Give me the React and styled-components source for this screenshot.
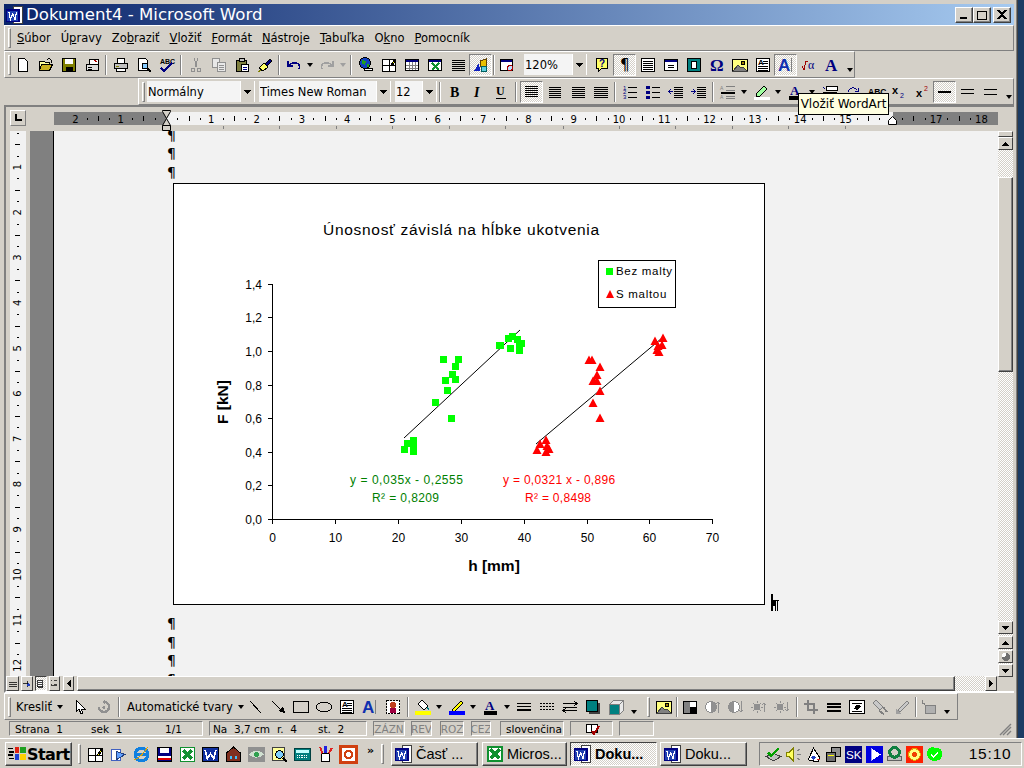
import React from 'react';
import styled, { createGlobalStyle } from 'styled-components';

const UI = '"DejaVu Sans", "Liberation Sans", sans-serif';
const FACE = '#d4d0c8';
const SHADOW = '#808080';
const DITHER = 'repeating-conic-gradient(#fff 0 25%, #d4d0c8 0 50%) 0 0 / 2px 2px';

const Global = createGlobalStyle`
  html, body { margin: 0; padding: 0; background: ${FACE}; overflow: hidden; }
  #root { width: 1024px; height: 768px; }
  * { box-sizing: border-box; }
`;

const Screen = styled.div`
  width: 1024px; height: 768px; display: flex; flex-direction: column; overflow: hidden;
  background: ${FACE}; font: 11px ${UI}; color: #000; position: relative; opacity: .999;
`;
const Upper = styled.div`display: flex; height: 738px; background: #1c3c64;`;
const Win = styled.div`
  width: 1018px; height: 738px; padding: 4px 3px 0 4px; background: ${FACE};
  border-right: 1px solid #404040; display: flex; flex-direction: column;
  box-shadow: inset -1px 0 0 ${SHADOW};
`;
const TitleBar = styled.div`
  height: 21px; flex: none; display: flex; align-items: center; padding: 0 3px 0 2px;
  background: linear-gradient(90deg, #0a246a, #a6caf0);
`;
const TitleText = styled.span`
  font: 16.6px ${UI}; color: #fff; margin-left: 2px; flex: 1; white-space: nowrap;
`;
const WinBtn = styled.button`
  width: 18px; height: 16px; padding: 0; margin-left: ${p => p.$gap || 0}px; background: ${FACE}; border: 1px solid;
  border-color: #fff #404040 #404040 #fff; display: flex; align-items: center; justify-content: center;
  box-shadow: inset -1px -1px 0 ${SHADOW};
`;
const Bar = styled.div`
  height: ${p => p.$h || 27}px; flex: none; display: flex; align-items: center;
  width: ${p => p.$w ? p.$w + 'px' : 'auto'}; margin-left: ${p => p.$ml || 0}px; padding: 0 0 0 3px;
  background: ${FACE};
  border-top: 1px solid #fff; border-left: 1px solid #fff; border-bottom: 1px solid ${SHADOW}; border-right: 1px solid ${SHADOW};
`;
const Grip = styled.i`
  width: 3px; height: 20px; flex: none; display: block; margin-left: ${p => p.$ml || 0}px; margin-right: ${p => p.$mr ?? 0}px;
  border: 1px solid; border-color: #fff ${SHADOW} ${SHADOW} #fff; 
`;
const Divider = styled.i`
  width: 2px; height: 20px; flex: none; display: block; margin: 0 ${p => p.$m ?? 2}px;
  border-left: 1px solid ${SHADOW}; border-right: 1px solid #fff;
`;
const MenuList = styled.div`display: flex; gap: 10px; margin-left: 6px; font: 11.5px ${UI}; color: #000;`;
const MenuItem = styled.span`white-space: nowrap;`;
const Tool = styled.span`
  width: ${p => p.$w || 23}px; height: 22px; flex: none; display: flex; align-items: center;
  justify-content: ${p => p.$left ? 'flex-start' : 'center'}; padding-left: ${p => p.$left ? 4 : 0}px;
  gap: 3px; ${p => p.$on && `background: ${DITHER}; border: 1px solid; border-color: ${SHADOW} #fff #fff ${SHADOW};`}
`;
const Caret = styled.i`
  flex: none; display: block; width: 0; height: 0; border: 3px solid transparent; border-top: 4px solid ${p => p.$c || '#000'};
  border-bottom: 0; margin-left: 2px;
`;
const Chevron = styled.span`
  width: 11px; height: 22px; flex: none; display: flex; align-items: flex-end; justify-content: center; padding-bottom: 4px;
`;
const Combo = styled.span`
  width: ${p => p.$w}px; height: 21px; flex: none; margin-left: ${p => p.$ml || 0}px; display: flex; background: #f4f4f4;
  font: 11.5px ${UI}; align-items: center; padding-left: 1px; white-space: nowrap; overflow: hidden;
`;
const ComboText = styled.span`flex: 1; overflow: hidden;`;
const ComboArrow = styled.span`
  width: 15px; height: 100%; background: ${FACE}; flex: none; border-left: 1px solid #fff; border-right: 1px solid #fff;
  display: flex; align-items: center; justify-content: center;
`;
const Tooltip = styled.div`
  position: absolute; left: 798px; top: 93px; width: 91px; height: 22px; background: #ffffe1; border: 1px solid #000;
  font: 12px ${UI}; display: flex; align-items: center; justify-content: center; white-space: nowrap; z-index: 5;
`;
const Editor = styled.div`
  flex: none; height: 588px; display: flex; flex-direction: column; border-top: 2px solid ${SHADOW}; border-left: 2px solid ${SHADOW};
  border-bottom: 2px solid #fff;
`;
const RulerRow = styled.div`display: flex; height: 24px; flex: none; align-items: stretch; padding-left: 4px;`;
const Corner = styled.div`
  width: 16px; height: 16px; margin-top: 3px; flex: none; border: 1px solid; border-color: #fff ${SHADOW} ${SHADOW} #fff;
  background: ${FACE}; display: flex; align-items: center; justify-content: center;
`;
const RulerArt = styled.svg`display: block; flex: none;`;
const RulerGap = styled.div`width: 28px; flex: none;`;
const MidRow = styled.div`display: flex; flex: 1; min-height: 0; padding-left: 4px;`;
const GrayBand = styled.div`width: 24px; flex: none; margin-left: 4px; background: ${SHADOW}; border-right: 1px solid #000;`;
const Doc = styled.div`
  width: 944px; flex: none; background: #f2f2f2; overflow: hidden; padding-left: 113px; display: flex; flex-direction: column;
`;
const Mark = styled.div`
  height: 18.5px; flex: none; font: 14px/18px "DejaVu Sans", sans-serif; color: #000; margin-top: ${p => p.$mt || 0}px;
`;
const ChartRow = styled.div`display: flex; align-items: flex-end; flex: none; margin: 2px 0 9px 6px; gap: 6px;`;
const ChartBox = styled.div`width: 592px; height: 422px; flex: none; background: #fff; border: 1px solid #000;`;
const ChartArt = styled.svg`display: block; width: 590px; height: 420px;`;
const ChartTitle = styled.text`font: 15.5px "Liberation Sans", sans-serif; letter-spacing: .7px; fill: #000;`;
const ChartTick = styled.text`font: 12px "Liberation Sans", sans-serif; fill: #000;`;
const ChartAxisName = styled.text`font: bold 15.5px "Liberation Sans", sans-serif; fill: #000;`;
const ChartEq = styled.text`font: 12px "Liberation Sans", sans-serif; fill: ${p => p.$c}; letter-spacing: ${p => p.$ls}px;`;
const LegendText = styled.text`font: 11.5px "Liberation Sans", sans-serif; letter-spacing: .7px; fill: #000;`;
const CaretMark = styled.svg`display: block; flex: none; margin-bottom: -6px;`;
const VScroll = styled.div`width: 15px; flex: none; display: flex; flex-direction: column; background: ${DITHER};`;
const Thumb = styled.div`
  height: ${p => p.$h}px; margin-top: ${p => p.$mt}px; flex: none; width: 100%; background: ${FACE}; border: 1px solid;
  border-color: #fff #404040 #404040 #fff; box-shadow: inset -1px -1px 0 ${SHADOW};
`;
const ScrollBtn = styled.span`
  width: ${p => p.$w || 15}px; height: ${p => p.$h || 13}px; flex: none; margin-top: ${p => p.$mt || 0}px; margin-left: ${p => p.$ml || 0}px;
  background: ${p => p.$on ? DITHER : FACE}; border: 1px solid; border-color: ${p => p.$on ? `#404040 #fff #fff #404040` : `#fff #404040 #404040 #fff`};
  display: flex; align-items: center; justify-content: center;
`;
const HScroll = styled.div`height: 15px; flex: none; display: flex; padding-left: 0; align-items: stretch;`;
const HThumb = styled.div`
  width: 878px; flex: none; margin-left: 3px; background: ${FACE}; border: 1px solid; border-color: #fff #404040 #404040 #fff; box-shadow: inset -1px -1px 0 ${SHADOW};
`;
const HTrack = styled.div`width: 30px; flex: none; background: ${DITHER};`;
const DrawLabel = styled.span`
  font: 11.5px ${UI}; white-space: nowrap; display: flex; align-items: center; gap: 3px; flex: none; margin: 0 ${p => p.$mr || 0}px 0 ${p => p.$ml || 0}px;
`;
const Status = styled.div`height: 16px; flex: none; display: flex; align-items: stretch; gap: 6px; padding: 1px 0 0 5px; position: relative;`;
const Pane = styled.div`
  width: ${p => p.$w}px; flex: none; border: 1px solid; border-color: ${SHADOW} #fff #fff ${SHADOW}; display: flex; align-items: center; padding-left: ${p => p.$pl ?? 5}px;
  font: 10.5px ${UI}; white-space: pre; color: ${p => p.$dim ? SHADOW : '#000'}; margin-left: ${p => p.$ml || 0}px; justify-content: ${p => p.$c ? 'center' : 'flex-start'};
  overflow: hidden;
`;
const Cell = styled.span`width: ${p => p.$w}px; flex: none;`;
const ResizeGrip = styled.svg`position: absolute; right: 2px; bottom: 0;`;
const Taskbar = styled.div`
  height: 30px; flex: none; display: flex; align-items: center; padding: 1px 2px 0 5px; background: ${FACE}; border-top: 1px solid #fff;
`;
const StartBtn = styled.div`
  width: 67px; height: 24px; flex: none; display: flex; align-items: center; gap: 1px; padding-left: 2px; border: 1px solid; border-color: #fff #404040 #404040 #fff;
  font: bold 16px ${UI}; box-shadow: inset -1px -1px 0 ${SHADOW}; letter-spacing: -.6px;
`;
const QuickIcon = styled.span`width: 23px; height: 20px; flex: none; display: flex; align-items: center; justify-content: center;`;
const More = styled.span`width: 21px; font: bold 11px ${UI}; flex: none; text-align: center; margin-bottom: 8px;`;
const TaskBtn = styled.div`
  width: ${p => p.$w || 87}px; height: 24px; flex: none; margin-left: ${p => p.$ml || 0}px; display: flex; align-items: center; gap: 3px; padding-left: 3px; border: 1px solid;
  border-color: ${p => p.$on ? `#404040 #fff #fff #404040` : `#fff #404040 #404040 #fff`}; background: ${p => p.$on ? DITHER : FACE};
  font: ${p => p.$on ? 'bold' : 'normal'} 14.5px "Liberation Sans", ${UI}; white-space: nowrap; overflow: hidden;
  box-shadow: ${p => p.$on ? 'none' : `inset -1px -1px 0 ${SHADOW}`};
`;
const Tray = styled.div`
  margin-left: 12px; width: 263px; height: 24px; flex: none; border: 1px solid; border-color: ${SHADOW} #fff #fff ${SHADOW}; display: flex; align-items: center; padding-left: 3px;
`;
const TrayIcon = styled.span`width: 20.2px; flex: none; display: flex; align-items: center; justify-content: center;`;
const Clock = styled.span`margin-left: 24px; font: 15.5px "Liberation Sans", sans-serif; letter-spacing: .8px;`;
const Glyph = styled.svg`display: block; flex: none; overflow: visible; shape-rendering: ${p => p.$smooth ? 'auto' : 'crispEdges'};`;
const IconText = styled.text`font: ${p => p.$w || 'normal'} ${p => p.$s || 9}px ${p => p.$f || '"Liberation Sans", sans-serif'}; fill: ${p => p.$c || '#000'};`;

const K = { stroke: '#000', fill: 'none' };
const lines = (ys, x1 = 2, x2 = 14, c = '#000') => ys.map(y => <path key={y} d={`M${x1} ${y + .5}H${x2}`} stroke={c} />);
const ICONS = {
  new: <path d="M3.5 1.5h6l3 3v10h-9z" fill="#fff" stroke="#000" />,
  open: <><path d="M1.5 13.5v-9h5l1 1h4v2" {...K} fill="#ffff99" /><path d="M1.5 13.5l2-6h11l-3 6z" fill="#c8b020" stroke="#000" /><path d="M9 3l2-2 2 2v3" stroke="#000" fill="none" /></>,
  save: <><path d="M1.5 1.5h13v13h-13z" fill="#808000" stroke="#000" /><path d="M4 2h8v5H4z" fill="#fff" /><path d="M4.5 10h7v4h-7z" fill="#000" /></>,
  mail: <><path d="M2.5 7.5h12v6h-12z" fill="#ddd" stroke="#000" /><path d="M5 2.5h9v5H5z" fill="#fff" stroke="#000" /><path d="M4 10h4M4 12h4" stroke="#000" /><path d="M10 3l3 2" stroke="#a00" /></>,
  print: <><path d="M4.5 1.5h7v5h-7z" fill="#fff" stroke="#000" /><path d="M1.5 6.5h13v5h-13z" fill="#c0c0c0" stroke="#000" /><path d="M3.5 11.5h9v3h-9z" fill="#fff" stroke="#000" /><path d="M3 9h3" stroke="#808000" /></>,
  preview: <><path d="M2.5 1.5h7l2 2v10h-9z" fill="#fff" stroke="#000" /><circle cx="9" cy="9" r="3" fill="#8cf" stroke="#000" /><path d="M11 11l4 4" stroke="#000" strokeWidth="2" /></>,
  spell: <><IconText x="1" y="7" $s={7} $w="bold">ABC</IconText><path d="M2 11l3 3 8-8" stroke="#000080" strokeWidth="2" fill="none" /></>,
  cut: <><path d="M6 1l3 9M10 1L7 10" stroke="#909090" fill="none" /><circle cx="5" cy="13" r="2" fill="none" stroke="#909090" /><circle cx="11" cy="13" r="2" fill="none" stroke="#909090" /></>,
  copy: <><path d="M1.5 1.5h7v9h-7z" fill="#e8e8e8" stroke="#909090" /><path d="M6.5 5.5h8v9h-8z" fill="#e8e8e8" stroke="#909090" /><path d="M8 8h5M8 10h5M8 12h5" stroke="#909090" /></>,
  paste: <><path d="M2.5 3.5h10v11h-10z" fill="#808040" stroke="#000" /><path d="M5 1.5h5v3H5z" fill="#c0c0c0" stroke="#000" /><path d="M7.5 7.5h7v7h-7z" fill="#fff" stroke="#000" /><path d="M9 10h4M9 12h4" stroke="#000080" /></>,
  brush: <><path d="M8 7l5-5 2 2-5 5z" fill="#000080" stroke="#000" /><path d="M2 11l5-5 4 4-5 4z" fill="#ffff66" stroke="#000" /><path d="M1 15l3-2" stroke="#808000" /></>,
  undo: <path d="M2 4v5h5M2.5 8.5c3-3 9-4 11 0 .5 1.5 0 3-1 4" stroke="#000080" strokeWidth="1.6" fill="none" />,
  redo: <path d="M14 4v5H9M13.5 8.5c-3-3-9-4-11 0-.5 1.5 0 3 1 4" stroke="#a0a0a0" strokeWidth="1.6" fill="none" />,
  web: <><circle cx="7" cy="6" r="5.5" fill="#1040c0" stroke="#000" /><path d="M4 3l4 1-1 4-3-1zM9 7h2v3H9z" fill="#20a020" /><path d="M6 11.5h8v2H6z" fill="#fff" stroke="#000" /></>,
  tableDraw: <><path d="M1.5 2.5h13v12h-13zM8 3v11M2 8.5h12" fill="#fff" stroke="#000" /><path d="M10 8l4-6 1 1-4 6z" fill="#ffff00" stroke="#000" /></>,
  table: <><path d="M1.5 2.5h13v11h-13z" fill="#fff" stroke="#000" /><path d="M2 3h12v2H2z" fill="#000080" /><path d="M2 8h12M2 11h12M5.5 5v8M8.5 5v8M11.5 5v8" stroke="#808080" /></>,
  excel: <><path d="M1.5 2.5h13v11h-13z" fill="#fff" stroke="#000" /><path d="M2 3h12v2H2z" fill="#000080" /><path d="M5 6l7 7M12 6l-7 7" stroke="#109030" strokeWidth="2.5" /></>,
  cols: lines([3, 5, 7, 9, 11, 13], 2, 15),
  draw: <><path d="M7 4l6-2v7l-6 1z" fill="#e8c000" stroke="#604000" /><path d="M1 14l5-8 1 8z" fill="#1020c0" /><circle cx="11" cy="12" r="3" fill="#60d0e0" stroke="#006060" /></>,
  map: <><path d="M1.5 2.5h12v11h-12z" fill="#fff" stroke="#000" /><path d="M2 3h11v2H2z" fill="#000080" /><circle cx="11" cy="11" r="2.5" fill="#c0e0ff" stroke="#a00" /></>,
  help: <><path d="M2.5 1.5h11v10h-6l-3 3v-3h-2z" fill="#ffff66" stroke="#000" /><IconText x="5" y="10" $s={10} $w="bold" $c="#000080">?</IconText></>,
  pilcrow: <IconText x="3" y="13" $s={15} $f='"DejaVu Sans", sans-serif'>¶</IconText>,
  doclines: <><path d="M1.5 1.5h13v13h-13z" fill="#fff" stroke="#000" />{lines([4, 6, 8, 10, 12], 3, 13)}</>,
  frameT: <><path d="M1.5 2.5h13v11h-13z" fill="#fff" stroke="#000" /><path d="M2 3h12v2H2z" fill="#000080" /><path d="M5 8h6M5 10h6" stroke="#000" /></>,
  reading: <><path d="M1.5 1.5h13v13h-13z" fill="#008080" stroke="#000" /><path d="M5.5 4.5h5v7h-5z" fill="#fff" stroke="#000" /></>,
  omega: <IconText x="1" y="14" $s={17} $w="bold" $c="#000080" $f='"Liberation Serif", serif'>Ω</IconText>,
  picture: <><path d="M.5 2.5h15v12H.5z" fill="#ffff80" stroke="#000" /><circle cx="11" cy="6" r="2" fill="#a08000" stroke="#000" /><path d="M1 14l5-6 3 3 2-1 4 4z" fill="#808080" stroke="#404040" /></>,
  textbox: <><path d="M1.5 1.5h13v13h-13z" fill="#fff" stroke="#000" /><IconText x="3" y="8" $s={8} $w="bold">A</IconText><path d="M8 4h5M8 6h5M3 9h10M3 11h10M3 13h10" stroke="#000" /></>,
  wordart: <><IconText x="0" y="14" $s={17} $w="bold" $c="#1030b0">A</IconText><path d="M13.5 1v14" stroke="#808080" /></>,
  sqrt: <><path d="M1 9l2 4 2-9h2" stroke="#a00000" fill="none" /><IconText x="7" y="12" $s={12} $c="#000080" $f='"Liberation Serif", serif'>α</IconText></>,
  aBlue: <IconText x="1" y="14" $s={17} $w="bold" $c="#000080" $f='"Liberation Serif", serif'>A</IconText>,
  bold: <IconText x="3" y="13" $s={14} $w="bold" $f='"Liberation Serif", serif'>B</IconText>,
  italic: <IconText x="4" y="13" $s={14} $w="bold italic" $f='"Liberation Serif", serif'>I</IconText>,
  under: <><IconText x="3" y="11" $s={12} $w="bold" $f='"Liberation Serif", serif'>U</IconText><path d="M3 14h10" stroke="#000" /></>,
  aLeft: lines([2, 4, 6, 8, 10, 12], 1, 14),
  aCenter: lines([3, 5, 7, 9, 11, 13], 2, 14),
  aRight: lines([3, 5, 7, 9, 11, 13], 2, 15),
  aJust: lines([3, 5, 7, 9, 11, 13], 1, 15),
  numList: <><IconText x="1" y="6" $s={6} $c="#000080">1</IconText><IconText x="1" y="10" $s={6} $c="#000080">2</IconText><IconText x="1" y="15" $s={6} $c="#000080">3</IconText>{lines([3, 8, 13], 6, 15)}</>,
  bulList: <><path d="M1 2h4v3H1zM1 7h4v3H1zM1 12h4v3H1z" fill="#000080" />{lines([3, 8, 13], 7, 15)}</>,
  outdent: <>{lines([3, 5, 9, 11, 13], 6, 15)}<path d="M5 7.5H1M3 5L1 7.5 3 10" stroke="#000080" fill="none" /><path d="M6 7.5h9" stroke="#000" /></>,
  indent: <>{lines([3, 5, 9, 11, 13], 6, 15)}<path d="M0 7.5h4M2 5l2 2.5L2 10" stroke="#000080" fill="none" /><path d="M6 7.5h9" stroke="#000" /></>,
  border: <>{lines([2, 6], 6, 15, '#808080')}<path d="M1 9h14" stroke="#000" strokeWidth="2" />{lines([12, 14], 6, 15, '#808080')}<IconText x="0" y="6" $s={5} $c="#808080">A</IconText><IconText x="0" y="15" $s={5} $c="#808080">A</IconText></>,
  highlight: <><path d="M3 9l7-7 3 3-7 7-4 1z" fill="#a0ffa0" stroke="#000" /><path d="M0 13h16v3H0z" fill="#fff" /></>,
  fontColor: <><IconText x="2" y="11" $s={13} $w="bold" $c="#000080" $f='"Liberation Serif", serif'>A</IconText><path d="M1 12h13v4H1z" fill="#000" /></>,
  enclosed: <><path d="M4.5 2.5h11v4h-11z" fill="#fff" stroke="#000" /><path d="M1 3l2 2" stroke="#000080" /><path d="M1 8h14M1 10h14" stroke="#000" /></>,
  flow: <><path d="M3 8a5 5 0 0 1 9-2M13 4v3h-3" stroke="#000080" fill="none" /><path d="M4 11h9" stroke="#000" /></>,
  abc: <IconText x="0" y="11" $s={8.5} $w="bold">ABC</IconText>,
  sub: <><IconText x="1" y="10" $s={11} $w="bold">x</IconText><IconText x="9" y="14" $s={7} $c="#000080">2</IconText></>,
  sup: <><IconText x="2" y="13" $s={11} $w="bold">x</IconText><IconText x="10" y="7" $s={7} $c="#a00000">2</IconText></>,
  line1: <path d="M1 7.5h13" stroke="#000" strokeWidth="2" />,
  line2: <path d="M1 5.5h13M1 9.5h13" stroke="#000" />,
  line3: <path d="M1 5.5h13M1 10.5h13" stroke="#000" />,
  cursor: <path d="M3 1v12l3-3 2 5 2-1-2-4h4z" fill="#fff" stroke="#000" />,
  rotate: <><path d="M3 8a5 5 0 1 0 6-5" stroke="#909090" strokeWidth="2.5" fill="none" /><path d="M9 0v6l-3-3z" fill="#909090" /><circle cx="8" cy="8.5" r="1.5" fill="#909090" /></>,
  line: <path d="M3 2l11 12" stroke="#000" />,
  arrow: <><path d="M2 2l9 9" stroke="#000" /><path d="M8 12l5-5 2 7z" fill="#000" /></>,
  rect: <path d="M.5 2.5h15v11H.5z" fill="none" stroke="#000" />,
  ellipse: <ellipse cx="8" cy="8" rx="7.5" ry="5" fill="none" stroke="#000" />,
  clip: <><path d="M1.5 1.5h13v13h-13z" fill="#fff" stroke="#000" strokeDasharray="2 1" /><circle cx="8" cy="6" r="3" fill="#c04020" /><path d="M5 9h6v5H5z" fill="#a00040" /></>,
  fill: <><path d="M7 1l6 6-4 4-6-6z" fill="#fff" stroke="#000" /><path d="M12 8l2 3" stroke="#008080" /><path d="M0 12h16v4H0z" fill="#ffff00" /></>,
  pen: <><path d="M4 10l8-8 2 2-8 8-3 1z" fill="#ffff00" stroke="#000" /><path d="M0 12h16v4H0z" fill="#0000ff" /></>,
  lineStyle: <><path d="M1 4.5h14M1 7.5h14" stroke="#000" strokeWidth="1" /><path d="M1 11h14" stroke="#000" strokeWidth="2" /></>,
  dash: <path d="M1 4.5h14M1 7.5h14M1 10.5h14" stroke="#000" strokeDasharray="2 1" />,
  arrows: <><path d="M1 4.5h14M12 2l3 2.5L12 7M1 11.5h14M4 9l-3 2.5L4 14M1 8h14" stroke="#000" fill="none" /></>,
  shadow: <><path d="M4 4h11v11H4z" fill="#404040" /><path d="M1.5 1.5h11v11h-11z" fill="#008080" stroke="#000" /></>,
  cube: <><path d="M1.5 5.5h10v10h-10z" fill="#008080" stroke="#808080" /><path d="M1.5 5.5l4-4h10l-4 4zM11.5 5.5l4-4v10l-4 4z" fill="#e8e8e8" stroke="#808080" /></>,
  contrast: <><path d="M1 2h7v12H1z" fill="#808080" /><path d="M8 2h6v6H8z" fill="#fff" /><path d="M8 8h6v6H8z" fill="#000" /><path d="M1 2h13v12H1z" fill="none" stroke="#000" /></>,
  conUp: <><circle cx="6" cy="8" r="5.5" fill="#fff" stroke="#909090" /><path d="M6 3a5 5 0 0 1 0 10z" fill="#909090" /><path d="M13 14V3M11 5l2-2 2 2" stroke="#909090" fill="none" /></>,
  conDn: <><circle cx="6" cy="8" r="5.5" fill="#fff" stroke="#909090" /><path d="M6 3a5 5 0 0 0 0 10z" fill="#909090" /><path d="M13 2v11M11 11l2 2 2-2" stroke="#909090" fill="none" /></>,
  sunUp: <><circle cx="6" cy="8" r="3" fill="#909090" /><path d="M6 2v2M6 12v2M0 8h2M10 8h2M2 4l2 2M8 10l2 2M10 4L8 6M2 12l2-2M13 13V4M11 6l2-2 2 2" stroke="#909090" fill="none" /></>,
  sunDn: <><circle cx="6" cy="8" r="3" fill="#909090" /><path d="M6 2v2M6 12v2M0 8h2M10 8h2M2 4l2 2M8 10l2 2M10 4L8 6M2 12l2-2M13 3v9M11 10l2 2 2-2" stroke="#909090" fill="none" /></>,
  crop: <path d="M5 1v10h10M1 5h10v10" stroke="#808080" strokeWidth="2.5" fill="none" />,
  lines: <path d="M1 4.5h14M1 8h14M1 11.5h14" stroke="#000" strokeWidth="2" />,
  format: <><path d="M.5 1.5h15v13H.5z" fill="#fff" stroke="#000" /><path d="M3 4h10M3 12h10" stroke="#000" /><path d="M5 10l2-4h3l2 2-2 1-1 2z" fill="#000" /></>,
  recolor: <><path d="M4 1l7 7-3 3-7-7z" fill="#c8c8c8" stroke="#808080" /><path d="M11 8l4 5M7 12l5 3" stroke="#808080" strokeWidth="2" /></>,
  setBrush: <><path d="M3 11L12 2l2 2-9 9z" fill="#c8c8c8" stroke="#808080" /><path d="M1 15h5l-5-5z" fill="#a0a0a0" /></>,
  wrap: <><path d="M4.5 6.5h10v8h-10z" fill="#b0b0b0" stroke="#808080" /><path d="M1 3l3 3M1 1v3h3" stroke="#808080" fill="none" /></>,
  word: <><path d="M.5 1.5h15v13H.5z" fill="#1030a0" stroke="#000" /><path d="M3 4l2 8 3-5 3 5 2-8" stroke="#fff" fill="none" strokeWidth="1.4" /></>,
  wordDoc: <><path d="M6.5 .5h8v15h-8z" fill="#fff" stroke="#404040" /><path d="M.5 3.5h11v10H.5z" fill="#2040b0" stroke="#000080" /><path d="M2.5 5l1.5 7 2-5 2 5L9.5 5" stroke="#fff" fill="none" /></>,
  xlDoc: <><path d="M1.5 1.5h13v13h-13z" fill="#fff" stroke="#109030" strokeWidth="1.6" /><path d="M4 4l8 8M12 4l-8 8" stroke="#109030" strokeWidth="3" /></>,
  outlook: <><path d="M1 3h9v11H1z" fill="#fff" stroke="#4060c0" /><path d="M6 5l8 3-8 5z" fill="#60a0ff" stroke="#204080" /></>,
  ie: <><circle cx="8" cy="8" r="6" fill="none" stroke="#1080e0" strokeWidth="3" /><path d="M3 8h10" stroke="#1080e0" strokeWidth="2" /><path d="M1 13c4-1 10-7 13-12" stroke="#e0a000" fill="none" /></>,
  quicksave: <><path d="M1.5 1.5h13v13h-13z" fill="#000080" stroke="#000" /><path d="M4 2h8v5H4z" fill="#fff" /><path d="M2 9h12v4H2z" fill="#e00000" /><path d="M2 9h12v2H2z" fill="#fff" /></>,
  house: <><path d="M1 7l7-6 7 6v8H1z" fill="#803020" stroke="#000" /><path d="M5 9h2v3H5zM9 9h2v3H9z" fill="#40c0ff" /></>,
  eye: <><path d="M0 1h16v14H0z" fill="#909090" /><path d="M1 8c4-5 10-5 14 0-4 4-10 4-14 0z" fill="#d0e0d0" /><circle cx="8" cy="8" r="2.5" fill="#30a050" /></>,
  searchDoc: <><path d="M1.5 1.5h11v12h-11z" fill="#ffff99" stroke="#404040" /><circle cx="8" cy="8" r="3.5" fill="#80d0ff" stroke="#000" /><path d="M11 11l4 4" stroke="#000" strokeWidth="2" /></>,
  calc: <><path d="M.5 2.5h15v11H.5z" fill="#008080" stroke="#004040" /><path d="M2 4h12v3H2z" fill="#c0ffff" /><path d="M3 9h10M3 11h10" stroke="#fff" strokeDasharray="1 1" /></>,
  pens: <><path d="M4 7h8v8H4z" fill="#fff" stroke="#000" /><path d="M5 7L3 1M11 7l3-5" stroke="#e02020" strokeWidth="2" /><path d="M8 7V0" stroke="#2020e0" strokeWidth="2" /></>,
  ppt: <><path d="M.5 .5h15v15H.5z" fill="#fff" stroke="#d04010" strokeWidth="2" /><circle cx="8" cy="8" r="3.5" fill="none" stroke="#d04010" strokeWidth="2" /></>,
  trayMail: <><path d="M1 10l7-3 7 3-7 4z" fill="#c0c0c0" stroke="#404040" /><path d="M3 6l3 3 7-7" stroke="#00a000" strokeWidth="2.5" fill="none" /></>,
  speaker: <><path d="M1 6h3l4-4v12l-4-4H1z" fill="#ffff60" stroke="#808000" /><path d="M11 5l3-2M11 8h4M11 11l3 2" stroke="#808080" /></>,
  disc: <><path d="M3 13l5-11 6 9-2 4z" fill="#fff" stroke="#000" /><circle cx="8" cy="11" r="2" fill="#2040c0" /><path d="M11 13h3" stroke="#e02020" /></>,
  net: <><path d="M6.5 1.5h8v8h-8z" fill="#909090" stroke="#000" /><path d="M1.5 6.5h8v8h-8z" fill="#707070" stroke="#000" /><path d="M3 9h5" stroke="#ffff00" /></>,
  sk: <><path d="M0 0h16v16H0z" fill="#000080" /><IconText x="1" y="12" $s={11} $c="#fff">SK</IconText></>,
  play: <><path d="M0 0h16v16H0z" fill="#0000e0" /><path d="M5 2l9 6-9 6z" fill="#fff" /><path d="M5 2v12" stroke="#a0a0ff" /></>,
  sync: <><path d="M1 10h14v4H1z" fill="#c0c0c0" stroke="#606060" /><circle cx="8" cy="6" r="4.5" fill="none" stroke="#108040" strokeWidth="3" /></>,
  redDial: <><path d="M0 0h16v16H0z" fill="#ff2000" /><circle cx="8" cy="8" r="5.5" fill="#ffff80" stroke="#e0a000" /><circle cx="8" cy="8" r="2.5" fill="#f04000" /></>,
  lime: <><path d="M1 5c1-4 5-5 8-3 4-1 6 2 6 5 1 4-2 7-6 7-5 1-9-4-8-9z" fill="#00ff00" /><path d="M5 8l2 2 4-4" stroke="#fff" strokeWidth="1.4" fill="none" /></>,
  book: <><path d="M2.5 3.5h5v8h-5zM7.5 3.5h6v8h-6z" fill="#fff" stroke="#000" /><path d="M8 10l2 3 5-8" stroke="#a00000" strokeWidth="2" fill="none" /></>,
  windows: <><path d="M6 2h4v5H6z" fill="#e02010" /><path d="M11 2h5v5h-5z" fill="#20a020" /><path d="M6 8h4v5H6z" fill="#2040d0" /><path d="M11 8h5v5h-5z" fill="#ffd000" /><path d="M0 3h4M1 6h4M0 9h4M1 12h4" stroke="#000" strokeWidth="1.5" /></>,
  viewNorm: lines([5, 8, 11], 2, 13),
  viewWeb: <><path d="M3 7.5h8M8 4v8" stroke="#000" /><circle cx="10" cy="9" r="2" fill="#2040c0" /></>,
  viewPage: <><path d="M3 3.5h7v8H3z" fill="#fff" stroke="#000" /><path d="M4 6h5M4 8h5M4 12h7" stroke="#000" /></>,
  viewOut: <path d="M3 4h2M7 4h4M3 9h2M7 9h4M3 11h8" stroke="#000" />,
};
const Ico = ({ n, size = 16, smooth }) => (
  <Glyph $smooth={smooth} width={size} height={size} viewBox="0 0 16 16">{ICONS[n]}</Glyph>
);
const Tri = ({ dir = 'down', c = '#000' }) => {
  const d = { down: 'M0 0h7L3.5 4z', up: 'M0 4h7L3.5 0z', left: 'M4 0v7L0 3.5z', right: 'M0 0v7L4 3.5z' }[dir];
  return <Glyph width={dir === 'left' || dir === 'right' ? 4 : 7} height={dir === 'left' || dir === 'right' ? 7 : 4}><path d={d} fill={c} /></Glyph>;
};
const MoreCaret = () => <Chevron><Caret /></Chevron>;

// item grammar: '|' separator, '/' narrow separator, '>' overflow chevron, 'name:' dropdown, 'name~' disabled dropdown, 'name!' active
const Items = ({ list, split = 33 }) => list.map((it, i) => {
  if (it === '|') return <Divider key={i} />;
  if (it === '/') return <Divider key={i} $m={.5} />;
  if (it === '>') return <MoreCaret key={i} />;
  if (it.endsWith(':')) return <Tool key={i} $left $w={split}><Ico n={it.slice(0, -1)} /><Caret /></Tool>;
  if (it.endsWith('~')) return <Tool key={i} $left $w={split}><Ico n={it.slice(0, -1)} /><Caret $c="#a0a0a0" /></Tool>;
  if (it.endsWith('!')) return <Tool key={i} $on><Ico n={it.slice(0, -1)} /></Tool>;
  return <Tool key={i}><Ico n={it} /></Tool>;
});

const menuItems = [
  ['', 'S', 'úbor'], ['Ú', 'p', 'ravy'], ['Zo', 'b', 'raziť'], ['', 'V', 'ložiť'], ['', 'F', 'ormát'], ['', 'N', 'ástroje'], ['', 'T', 'abuľka'], ['O', 'k', 'no'], ['', 'P', 'omocník'],
];

function HRuler() {
  const ox = 166, s = 45.3;
  const cells = [];
  for (let n = -2; n <= 18; n++) {
    const x = ox + n * s;
    if (n !== 0 && n !== 16) cells.push(<IconText key={'n' + n} $s={10} x={x} y={123.5} textAnchor="middle" $f={UI}>{Math.abs(n)}</IconText>);
    if (n < 18) {
      [.25, .75].forEach(f => cells.push(<rect key={'d' + n + f} x={Math.round(x + f * s)} y={119} width="1" height="2" fill="#000" />));
      cells.push(<rect key={'h' + n} x={Math.round(x + .5 * s)} y={117} width="1" height="5" fill="#000" />);
    }
  }
  const tabs = [223, 279, 336, 392, 449, 505, 563, 619, 675, 732, 788, 845];
  return (
    <RulerArt width="944" height="24" viewBox="54 108 944 24">
      <rect x="54" y="113" width="112" height="13" fill={SHADOW} />
      <rect x="166" y="113" width="727" height="13" fill="#f2f2f2" />
      <rect x="893" y="113" width="105" height="13" fill={SHADOW} />
      {cells}
      {tabs.map(t => <rect key={t} x={t} y="127" width="1" height="3" fill={SHADOW} />)}
      <path d="M162.5 111.5h8v1l-4 7 4 7v3h-8v-3l4-7-4-7z" fill={FACE} stroke="#000" />
      <path d="M162.5 126.5h8v5h-8z" fill={FACE} stroke="#000" />
      <path d="M888.5 125.5v-4l4-4 4 4v4z" fill="#fff" stroke="#000" />
    </RulerArt>
  );
}
function VRuler() {
  const oy = 122.7, s = 45.3, cells = [];
  for (let n = 0; n <= 12; n++) {
    const y = oy + n * s;
    if (n > 0) cells.push(<IconText key={'n' + n} $s={10} textAnchor="middle" $f={UI} transform={`translate(21 ${y}) rotate(-90)`}>{n}</IconText>);
    [.25, .75].forEach(f => cells.push(<rect key={'d' + n + f} x={17} y={Math.round(y + f * s)} width="2" height="1" fill="#000" />));
    cells.push(<rect key={'h' + n} x={15} y={Math.round(y + .5 * s)} width="5" height="1" fill="#000" />);
  }
  return (
    <RulerArt width="16" height="545" viewBox="10 132 16 545">
      <rect x="10" y="132" width="16" height="545" fill="#f2f2f2" />
      {cells}
    </RulerArt>
  );
}

const GREEN = [[404,450],[407,444],[413,441],[413,445],[413,452],[411,444],[435,403],[451,419],[447,391],[445,381],[455,380],[452,375],[455,367],[443,360],[458,360],[499,346],[508,339],[500,346],[512,337],[517,340],[521,344],[510,349],[519,351],[519,347]];
const RED = [[540,445],[546,441],[537,451],[546,453],[549,450],[547,447],[589,361],[592,361],[600,368],[597,376],[594,382],[597,382],[593,382],[600,392],[593,404],[600,419],[663,339],[655,342],[662,346],[658,347],[657,351],[659,353]];

function Chart() {
  const yTicks = ['0,0', '0,2', '0,4', '0,6', '0,8', '1,0', '1,2', '1,4'];
  const xTicks = [0, 10, 20, 30, 40, 50, 60, 70];
  return (
    <ChartBox>
      <ChartArt viewBox="174 185 590 420">
        <ChartTitle x="323" y="236">Únosnosť závislá na hĺbke ukotvenia</ChartTitle>
        <path d="M272.5 285v235.5H712.5" fill="none" stroke="#000" shapeRendering="crispEdges" />
        {yTicks.map((t, i) => {
          const y = Math.round(520 - i * 33.6) + .5;
          return <g key={t}><path d={`M268 ${y}h4`} stroke="#000" shapeRendering="crispEdges" /><ChartTick x="262" y={y + 4.5} textAnchor="end">{t}</ChartTick></g>;
        })}
        {xTicks.map((t, i) => {
          const x = Math.round(272 + i * 62.9) + .5;
          return <g key={t}><path d={`M${x} 520v5`} stroke="#000" shapeRendering="crispEdges" /><ChartTick x={x} y="543" textAnchor="middle">{t}</ChartTick></g>;
        })}
        <ChartAxisName transform="translate(228 403) rotate(-90)" textAnchor="middle">F [kN]</ChartAxisName>
        <ChartAxisName x="494" y="572" textAnchor="middle">h [mm]</ChartAxisName>
        <path d="M404 439L520 331M536 445L662 339" stroke="#000" fill="none" />
        {GREEN.map(([x, y], i) => <rect key={i} x={x - 3.5} y={y - 3.5} width="7" height="7" fill="#00ff00" shapeRendering="crispEdges" />)}
        {RED.map(([x, y], i) => <path key={i} d={`M${x} ${y - 4.5}l4.5 8.5h-9z`} fill="#ff0000" />)}
        <ChartEq $c="#008000" $ls={.55} x="350" y="485">y = 0,035x - 0,2555</ChartEq>
        <ChartEq $c="#008000" $ls={.4} x="372" y="503">R² = 0,8209</ChartEq>
        <ChartEq $c="#ff0000" $ls={.3} x="503" y="485">y = 0,0321 x - 0,896</ChartEq>
        <ChartEq $c="#ff0000" $ls={.3} x="525" y="503">R² = 0,8498</ChartEq>
        <rect x="598.5" y="261.5" width="77" height="47" fill="#fff" stroke="#000" shapeRendering="crispEdges" />
        <rect x="606" y="269" width="7" height="7" fill="#00ff00" shapeRendering="crispEdges" />
        <path d="M610 291l4 8h-8z" fill="#ff0000" />
        <LegendText x="616" y="276">Bez malty</LegendText>
        <LegendText x="616" y="299">S maltou</LegendText>
      </ChartArt>
    </ChartBox>
  );
}

export default function App() {
  return (
    <Screen>
      <Global />
      <Upper>
        <Win>
          <TitleBar>
            <Ico n="wordDoc" size={18} />
            <TitleText>Dokument4 - Microsoft Word</TitleText>
            <WinBtn><Glyph width="8" height="8"><path d="M0 6h7v2H0z" fill="#000" /></Glyph></WinBtn>
            <WinBtn><Glyph width="10" height="10"><path d="M.5 1.5h9v8h-9zM0 1h10" fill="none" stroke="#000" /></Glyph></WinBtn>
            <WinBtn $gap={2}><Glyph width="10" height="9"><path d="M1 0l8 9M9 0L1 9" stroke="#000" strokeWidth="2" fill="none" /></Glyph></WinBtn>
          </TitleBar>
          <Bar $h={26}>
            <Grip />
            <MenuList>
              {menuItems.map(([a, b, c]) => <MenuItem key={a + b + c}>{a}<u>{b}</u>{c}</MenuItem>)}
            </MenuList>
          </Bar>
          <Bar $w={851}>
            <Grip />
            <Items list={['new', 'open', 'save', 'mail', '|', 'print', 'preview', 'spell', '|', 'cut', 'copy', 'paste', 'brush', '|', 'undo:', 'redo~', '|', 'web', 'tableDraw', 'table', 'excel', 'cols', 'draw!', '/', 'map']} />
            <Combo $w={63} $ml={6}><ComboText>120%</ComboText><ComboArrow><Tri /></ComboArrow></Combo>
            <Tool $w={3} />
            <Items list={['help', 'pilcrow!', 'doclines', 'frameT', 'reading', 'omega', 'picture', 'textbox', 'wordart!', 'sqrt', 'aBlue', '>']} />
          </Bar>
          <Bar $ml={134} $w={876}>
            <Grip />
            <Combo $w={108} $ml={2}><ComboText>Normálny</ComboText><ComboArrow><Tri /></ComboArrow></Combo>
            <Combo $w={132} $ml={4}><ComboText>Times New Roman</ComboText><ComboArrow><Tri /></ComboArrow></Combo>
            <Combo $w={42} $ml={4}><ComboText>12</ComboText><ComboArrow><Tri /></ComboArrow></Combo>
            <Divider $m={2} />
            <Items list={['bold', 'italic', 'under']} />
            <Divider $m={3} />
            <Items split={34} list={['aLeft!', 'aCenter', 'aRight', 'aJust', '|', 'numList', 'bulList', 'outdent', 'indent', '|', 'border:', 'highlight:', 'fontColor:', 'enclosed', 'flow', 'abc', 'sub', 'sup', 'line1!', 'line2', 'line3', '>']} />
          </Bar>
          <Editor>
            <RulerRow>
              <Corner><Glyph width="8" height="8"><path d="M1 0h2v5h5v2H1z" fill="#000" /></Glyph></Corner>
              <RulerGap />
              <HRuler />
            </RulerRow>
            <MidRow>
              <VRuler />
              <GrayBand />
              <Doc>
                <Mark $mt={-5.5}>¶</Mark>
                <Mark>¶</Mark>
                <Mark>¶</Mark>
                <ChartRow>
                  <Chart />
                  <CaretMark width="10" height="17"><path d="M0 0h2v17H0z" fill="#000" /><path d="M2 6h6v1H7v10H6V7H5v10H4v-5H2" fill="#000" /></CaretMark>
                </ChartRow>
                <Mark>¶</Mark>
                <Mark>¶</Mark>
                <Mark>¶</Mark>
                <Mark>¶</Mark>
              </Doc>
              <VScroll>
                <ScrollBtn $h={6} />
                <ScrollBtn $h={13}><Tri dir="up" /></ScrollBtn>
                <Thumb $h={195} $mt={27} />
                <ScrollBtn $h={13} $mt={249}><Tri /></ScrollBtn>
                <ScrollBtn $h={13} $mt={2}><Tri dir="up" /></ScrollBtn>
                <ScrollBtn $h={13} $mt={1}><Glyph width="10" height="10"><circle cx="5" cy="5" r="4" fill="#707070" /><circle cx="3" cy="3" r="2" fill="#fff" /></Glyph></ScrollBtn>
                <ScrollBtn $h={13} $mt={1}><Tri /></ScrollBtn>
              </VScroll>
            </MidRow>
            <HScroll>
              <ScrollBtn $w={13} $h={15}><Ico n="viewNorm" size={12} /></ScrollBtn>
              <ScrollBtn $w={12} $h={15} $ml={2}><Ico n="viewWeb" size={12} /></ScrollBtn>
              <ScrollBtn $w={12} $h={15} $ml={2} $on><Ico n="viewPage" size={12} /></ScrollBtn>
              <ScrollBtn $w={11} $h={15} $ml={2}><Ico n="viewOut" size={11} /></ScrollBtn>
              <ScrollBtn $w={11} $h={15} $ml={3}><Tri dir="left" /></ScrollBtn>
              <HThumb />
              <HTrack />
              <ScrollBtn $w={12} $h={15}><Tri dir="right" /></ScrollBtn>
            </HScroll>
          </Editor>
          <Bar $w={954}>
            <Grip />
            <DrawLabel $ml={5} $mr={7}>Kresliť <Caret /></DrawLabel>
            <Items list={['cursor', 'rotate', '|']} />
            <DrawLabel $ml={5}>Automatické tvary <Caret /></DrawLabel>
            <Items split={34} list={['line', 'arrow', 'rect', 'ellipse', 'textbox', 'wordart', 'clip', '|', 'fill:', 'pen:', 'fontColor:', 'lineStyle', 'dash', 'arrows', 'shadow', 'cube', '>']} />
            <Grip $ml={8} $mr={3} />
            <Items list={['picture', '/', 'contrast', 'conUp', 'conDn', 'sunUp', 'sunDn', '|', 'crop', 'lines', 'format', 'recolor', 'setBrush', '/', 'wrap', '>']} />
          </Bar>
          <Status>
            <Pane $w={194}><Cell $w={76}>Strana  1</Cell><Cell $w={74}>sek  1</Cell><Cell $w={30}>1/1</Cell></Pane>
            <Pane $w={158} $pl={3}><Cell $w={64}>Na  3,7 cm</Cell><Cell $w={41}>r.  4</Cell><Cell $w={40}>st.  2</Cell></Pane>
            <Pane $w={32} $pl={0} $c $dim>ZÁZN</Pane>
            <Pane $w={21} $pl={0} $c $dim>REV</Pane>
            <Pane $w={24} $pl={0} $c $ml={2} $dim>ROZ</Pane>
            <Pane $w={20} $pl={0} $c $ml={1} $dim>CEZ</Pane>
            <Pane $w={64} $ml={3}>slovenčina</Pane>
            <Pane $w={43} $pl={0} $c><Ico n="book" /></Pane>
            <Pane $w={35} />
            <ResizeGrip width="13" height="13"><path d="M12 1L1 12M12 4l-8 8M12 8l-4 4" stroke={SHADOW} fill="none" strokeWidth="1.4" /></ResizeGrip>
          </Status>
        </Win>
      </Upper>
      <Taskbar>
        <StartBtn><Ico n="windows" size={18} />Start</StartBtn>
        <Grip $ml={6} $mr={3} />
        {['tableDraw', 'outlook', 'ie', 'quicksave', 'xlDoc', 'word', 'house', 'eye', 'searchDoc', 'calc', 'pens', 'ppt'].map(n => <QuickIcon key={n}><Ico n={n} size={17} /></QuickIcon>)}
        <More>»</More>
        <Grip $mr={7} />
        <TaskBtn><Ico n="wordDoc" size={18} />Časť ...</TaskBtn>
        <TaskBtn $ml={4} $w={85}><Ico n="xlDoc" size={18} />Micros...</TaskBtn>
        <TaskBtn $ml={3} $on><Ico n="wordDoc" size={18} />Doku...</TaskBtn>
        <TaskBtn $ml={3}><Ico n="wordDoc" size={18} />Doku...</TaskBtn>
        <Tray>
          {['trayMail', 'speaker', 'disc', 'net', 'sk', 'play', 'sync', 'redDial', 'lime'].map(n => <TrayIcon key={n}><Ico n={n} size={17} /></TrayIcon>)}
          <Clock>15:10</Clock>
        </Tray>
      </Taskbar>
      <Tooltip>Vložiť WordArt</Tooltip>
    </Screen>
  );
}
